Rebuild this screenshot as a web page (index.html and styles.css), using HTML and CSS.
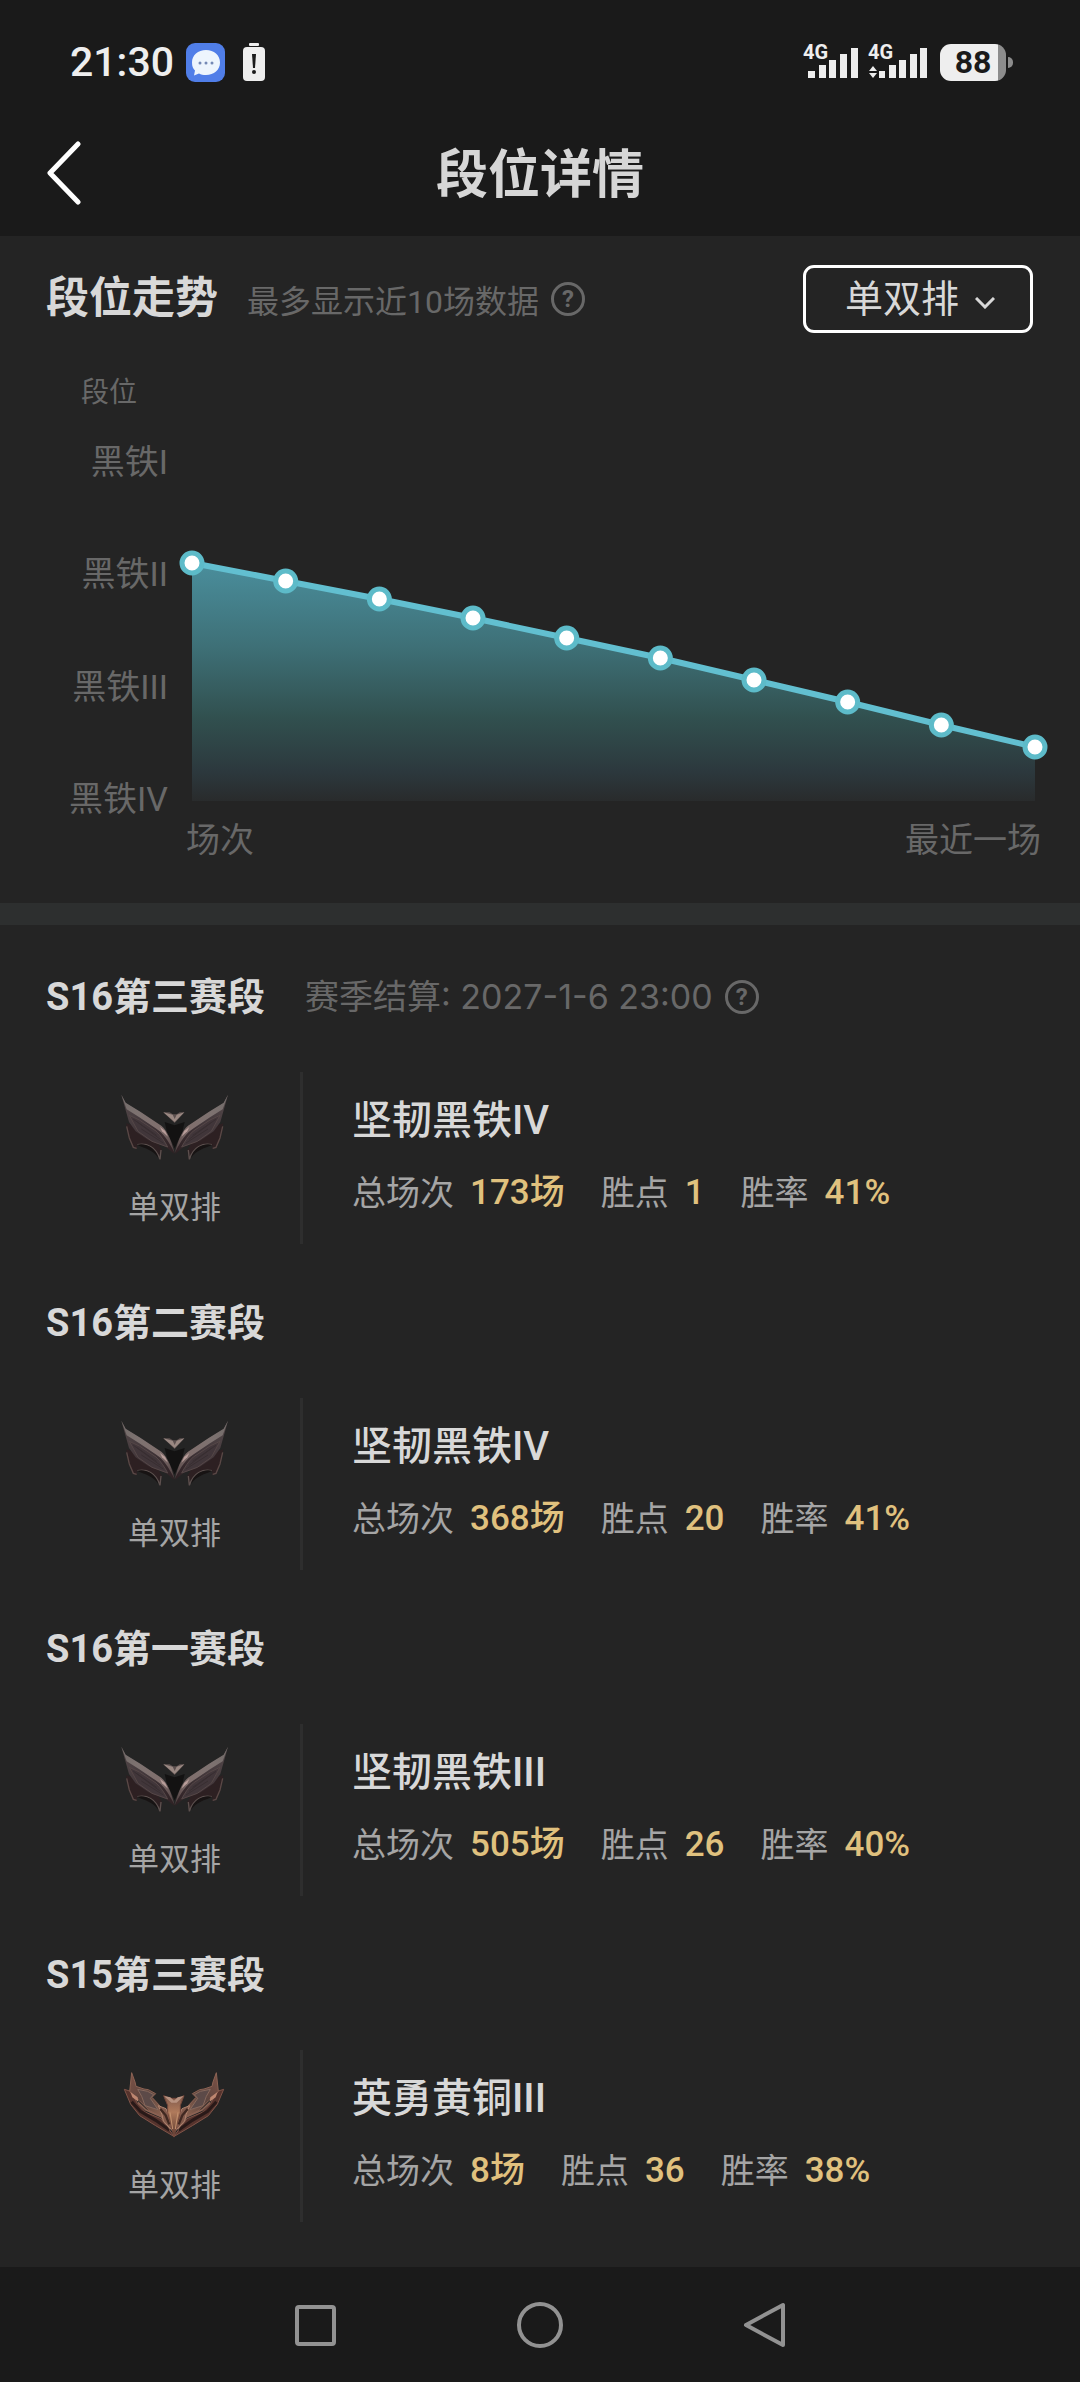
FILE: index.html
```html
<!DOCTYPE html>
<html lang="zh-CN">

<head>
    <meta charset="UTF-8">
    <meta name="viewport" content="width=device-width, initial-scale=1">
    <title>段位详情</title>
    <link rel="stylesheet" href="styles.css">
</head>

<body>
    <!-- shared rank emblems -->
    <svg class="sprite" aria-hidden="true">
        <defs>
            <linearGradient id="ironWing" x1="0" y1="0" x2="1" y2="1">
                <stop offset="0" stop-color="#54494a" />
                <stop offset="0.5" stop-color="#41363a" />
                <stop offset="1" stop-color="#2e2023" />
            </linearGradient>
            <linearGradient id="ironEdge" x1="0" y1="0" x2="1" y2="1">
                <stop offset="0" stop-color="#706a68" />
                <stop offset="0.3" stop-color="#7d7270" />
                <stop offset="0.65" stop-color="#806f6d" />
                <stop offset="1" stop-color="#4c3d3e" />
            </linearGradient>
            <linearGradient id="bronze" x1="0" y1="0" x2="1" y2="1">
                <stop offset="0" stop-color="#7c5145" />
                <stop offset="0.5" stop-color="#5d453f" />
                <stop offset="1" stop-color="#8f6450" />
            </linearGradient>
            <linearGradient id="bronzeCore" x1="0" y1="0" x2="0" y2="1">
                <stop offset="0" stop-color="#7d584b" />
                <stop offset="0.4" stop-color="#b07a5b" />
                <stop offset="1" stop-color="#5c392f" />
            </linearGradient>
            <g id="ironSide">
                <path d="M48 136 L56 172 L68 209 L80 213 L82 199 C104 192 137 204 151 245 L156 216 L140 190 L90 150Z" fill="#2d2022" />
                <path d="M50 145 L58 180 L70 208 L80 211" fill="none" stroke="#5a4846" stroke-width="4" />
                <path d="M82 200 C110 194 138 206 150 244 L153 216" fill="none" stroke="#5c504e" stroke-width="4" />
                <path d="M80 201 C104 210 130 216 145 240 C137 208 104 193 80 201Z" fill="#171313" />
                <path d="M34 50 L47 76 L91 103 L145 139 C166 151 181 183 193 228 L168 207 L116 187 L77 160 L57 132Z" fill="url(#ironWing)" />
                <path d="M34 50 L47 74 L92 102 L146 138 C168 150 182 180 194 226 C173 184 160 166 137 151 L88 118 L50 94Z" fill="url(#ironEdge)" />
                <path d="M58 112 L88 126 L138 159 C153 172 165 192 173 207 L126 190 L84 160Z" fill="#41363a" stroke="#554747" stroke-width="3" />
                <path d="M70 124 L140 172 M82 132 L151 184 M94 153 L160 195" stroke="#382e31" stroke-width="3" />
                <path d="M150 147 L165 158 L174 176 L156 160Z" fill="#b89d9a" />
            </g>
            <g id="bronzeSide">
                <path d="M43 100 L62 106 L82 142 L107 169 L153 188 L193 242 L137 209 L89 179 L62 145Z" fill="#55332d" stroke="#805448" stroke-width="3" />
                <path d="M65 50 L75 78 L78 91 L102 99 L115 101 L137 113 L126 124 L151 151 L158 184 L117 163 L88 134 L59 106Z" fill="url(#bronze)" stroke="#8b6253" stroke-width="3" />
                <path d="M83 100 L113 106 L131 116 L121 127 L144 161 L105 149 L95 121Z" fill="#5c4a48" stroke="#87695d" stroke-width="3" />
                <path d="M61 108 L83 124 L85 137 L67 124Z" fill="#bd8670" />
                <path d="M65 137 L91 166 L137 193 L178 222" fill="none" stroke="#291918" stroke-width="9" />
                <path d="M84 139 L108 162 L154 182 L181 220" fill="none" stroke="#8c6253" stroke-width="5" />
                <path d="M145 149 L168 158 L179 187 L187 224 L160 195 L156 176Z" fill="#81594b" stroke="#b0846f" stroke-width="3" />
                <path d="M151 159 L167 178 L178 205" fill="none" stroke="#402821" stroke-width="7" />
            </g>
            <symbol id="iron" viewBox="0 0 390 270">
                <path d="M164 132 L194 142 L224 132 L217 162 L194 211 L171 162Z" fill="#131212" />
                <use href="#ironSide" />
                <use href="#ironSide" transform="translate(388 0) scale(-1 1)" />
                <path d="M160 103 L179 103 L188 109 L200 109 L209 103 L223 103 L194 135Z" fill="#5d5150" />
                <path d="M160 103 L188 110 L194 123 L200 110 L223 103 L194 132Z" fill="#9a8882" />
            </symbol>
            <symbol id="bronzeBadge" viewBox="0 0 390 270">
                <use href="#bronzeSide" />
                <use href="#bronzeSide" transform="translate(384 0) scale(-1 1)" />
                <path d="M161 119 L181 127 L204 127 L222 119 L211 148 L211 170 L192 242 L173 170 L173 148Z" fill="url(#bronzeCore)" stroke="#75483b" stroke-width="3" />
                <path d="M162 120 L181 124 L192 134 L203 124 L221 120 L200 140 L184 140Z" fill="#b89280" />
                <path d="M180 169 L188 219 M204 169 L196 219" stroke="#c4926f" stroke-width="3" />
            </symbol>
        </defs>
    </svg>

    <div class="status-bar">
        <div class="status-left">
            <span class="clock">21:30</span>
            <svg class="message-icon" viewBox="0 0 39 39" aria-hidden="true">
                <rect width="39" height="39" rx="9" fill="#507ee8" />
                <path d="M20 7C12 7 6 12 6 19.500c0 4 1 6 3 8l-1 5 5-2c2 1 4 1.500 7 1.500 8 0 14-5 14-12.500S28 7 20 7z" fill="#edf5fd" />
                <g fill="#7489b5">
                    <circle cx="14" cy="20" r="1.500" />
                    <circle cx="20" cy="20" r="1.500" />
                    <circle cx="26" cy="20" r="1.500" />
                </g>
            </svg>
            <svg class="alert-icon" viewBox="0 0 22 38" aria-hidden="true">
                <rect x="6" width="10" height="3" rx="1" fill="#eee" />
                <rect y="4" width="22" height="34" rx="4" fill="#eee" />
                <path d="M9 11h4l-1 14h-2z" fill="#1a1a1a" />
                <circle cx="11" cy="29" r="2" fill="#1a1a1a" />
            </svg>
        </div>
        <div class="status-right">
            <svg class="signal" viewBox="0 0 60 46" aria-hidden="true">
                <text x="1" y="20">4G</text>
                <path d="M6 32h7v7H6zM17 26h7v13h-7zM27 21h7v18h-7zM38 15h7v24h-7zM49 9h7v30h-7z" />
            </svg>
            <svg class="signal" viewBox="0 0 60 46" aria-hidden="true">
                <text x="1" y="20">4G</text>
                <path d="M12 32h6v7h-6zM22 26h7v13h-7zM32 21h7v18h-7zM43 15h7v24h-7zM53 9h7v30h-7z" />
                <path d="M6 27l4 5H2zM6 39l-4-5h8z" />
            </svg>
            <div class="battery"><span>88</span></div>
        </div>
    </div>

    <header class="page-header">
        <button class="back" type="button" aria-label="返回">
            <svg viewBox="0 0 36 64" aria-hidden="true">
                <path d="M32 3 L4 32 L32 61" />
            </svg>
        </button>
        <h1>段位详情</h1>
    </header>

    <main>
        <section class="trend">
            <div class="trend-head">
                <div class="trend-title">
                    <h2>段位走势</h2>
                    <span class="hint">最多显示近10场数据</span>
                </div>
                <button class="help" type="button" aria-label="走势说明">?</button>
                <div class="mode">
                    <select class="mode-select" aria-label="排位模式">
                        <option>单双排</option>
                    </select>
                    <svg class="mode-arrow" viewBox="0 0 20 12" aria-hidden="true">
                        <path d="M1 1 L10 10 L19 1" />
                    </svg>
                </div>
            </div>

            <p class="axis-name">段位</p>
            <div class="chart">
                <div class="y-axis">
                    <span>黑铁I</span>
                    <span>黑铁II</span>
                    <span>黑铁III</span>
                    <span>黑铁IV</span>
                </div>
                <svg class="plot" viewBox="0 0 871 372" role="img" aria-label="段位走势">
                    <defs>
                        <linearGradient id="area" x1="0" y1="0" x2="0" y2="1">
                            <stop offset="0" stop-color="#4a8e9c" />
                            <stop offset="0.35" stop-color="#3e7077" />
                            <stop offset="0.65" stop-color="#31504f" />
                            <stop offset="0.88" stop-color="#2c383d" />
                            <stop offset="1" stop-color="#292b2c" />
                        </linearGradient>
                    </defs>
                    <path id="fill" fill="url(#area)" />
                    <polyline id="line" />
                    <g id="dots"></g>
                </svg>
                <div class="x-axis">
                    <span>场次</span>
                    <span>最近一场</span>
                </div>
            </div>
        </section>

        <div class="seasons">
            <section class="season">
                <div class="season-head">
                    <h3>S16第三赛段</h3>
                    <span class="settle">赛季结算: 2027-1-6 23:00</span>
                    <button class="help" type="button" aria-label="结算说明">?</button>
                </div>
                <div class="season-body">
                    <div class="rank">
                        <svg class="emblem" aria-hidden="true"><use href="#iron" /></svg>
                        <span>单双排</span>
                    </div>
                    <div class="detail">
                        <h4>坚韧黑铁IV</h4>
                        <dl>
                            <div><dt>总场次</dt><dd>173场</dd></div>
                            <div><dt>胜点</dt><dd>1</dd></div>
                            <div><dt>胜率</dt><dd>41%</dd></div>
                        </dl>
                    </div>
                </div>
            </section>

            <section class="season">
                <div class="season-head">
                    <h3>S16第二赛段</h3>
                </div>
                <div class="season-body">
                    <div class="rank">
                        <svg class="emblem" aria-hidden="true"><use href="#iron" /></svg>
                        <span>单双排</span>
                    </div>
                    <div class="detail">
                        <h4>坚韧黑铁IV</h4>
                        <dl>
                            <div><dt>总场次</dt><dd>368场</dd></div>
                            <div><dt>胜点</dt><dd>20</dd></div>
                            <div><dt>胜率</dt><dd>41%</dd></div>
                        </dl>
                    </div>
                </div>
            </section>

            <section class="season">
                <div class="season-head">
                    <h3>S16第一赛段</h3>
                </div>
                <div class="season-body">
                    <div class="rank">
                        <svg class="emblem" aria-hidden="true"><use href="#iron" /></svg>
                        <span>单双排</span>
                    </div>
                    <div class="detail">
                        <h4>坚韧黑铁III</h4>
                        <dl>
                            <div><dt>总场次</dt><dd>505场</dd></div>
                            <div><dt>胜点</dt><dd>26</dd></div>
                            <div><dt>胜率</dt><dd>40%</dd></div>
                        </dl>
                    </div>
                </div>
            </section>

            <section class="season">
                <div class="season-head">
                    <h3>S15第三赛段</h3>
                </div>
                <div class="season-body">
                    <div class="rank">
                        <svg class="emblem" aria-hidden="true"><use href="#bronzeBadge" /></svg>
                        <span>单双排</span>
                    </div>
                    <div class="detail">
                        <h4>英勇黄铜III</h4>
                        <dl>
                            <div><dt>总场次</dt><dd>8场</dd></div>
                            <div><dt>胜点</dt><dd>36</dd></div>
                            <div><dt>胜率</dt><dd>38%</dd></div>
                        </dl>
                    </div>
                </div>
            </section>
        </div>
    </main>

    <nav class="nav-bar">
        <button type="button" aria-label="最近任务">
            <svg viewBox="0 0 48 48" aria-hidden="true"><rect x="6" y="6" width="37" height="37" rx="2" /></svg>
        </button>
        <button type="button" aria-label="主屏幕">
            <svg viewBox="0 0 48 48" aria-hidden="true"><circle cx="24" cy="24" r="21" /></svg>
        </button>
        <button type="button" aria-label="后退">
            <svg viewBox="0 0 48 48" aria-hidden="true"><path d="M42 4 V44 L5 24Z" /></svg>
        </button>
    </nav>

    <script>
        // last 10 matches, y position inside the plot
        const points = [119, 137, 155, 174, 194, 214, 236, 258, 281, 303];
        const left = 14;
        const right = 857;
        const bottom = 357;

        const step = (right - left) / (points.length - 1);
        const coords = points.map((y, i) => [left + i * step, y]);
        const text = coords.map(p => p.join(',')).join(' ');

        document.getElementById('line').setAttribute('points', text);
        document.getElementById('fill').setAttribute('d', `M${text} ${right},${bottom} ${left},${bottom}Z`);
        document.getElementById('dots').innerHTML = coords
            .map(([x, y]) => `<circle cx="${x}" cy="${y}" r="10" />`)
            .join('');
    </script>
</body>

</html>
```
FILE: styles.css
```css
* {
    margin: 0;
    padding: 0;
    box-sizing: border-box;
}

body {
    display: flex;
    flex-direction: column;
    min-height: 100vh;
    background: #242424;
    color: #d8d8d8;
    font-family: Roboto, "Noto Sans CJK SC", sans-serif;
}

button {
    background: none;
    border: 0;
    cursor: pointer;
}

svg {
    display: block;
}

.sprite {
    position: absolute;
    width: 0;
    height: 0;
}

/* status bar */
.status-bar {
    display: flex;
    justify-content: space-between;
    align-items: center;
    height: 110px;
    padding: 14px 74px 0 70px;
    background: #1a1a1a;
}

.status-left,
.status-right {
    display: flex;
    align-items: center;
}

.clock {
    margin-right: 12px;
    font-size: 41px;
    font-weight: 500;
    line-height: 48px;
    color: #eee;
}

.message-icon {
    width: 39px;
    height: 39px;
    margin-right: 18px;
}

.alert-icon {
    width: 22px;
    height: 38px;
}

.signal {
    width: 60px;
    height: 46px;
    margin-right: 5px;
    fill: #eee;
    font-size: 20px;
    font-weight: 700;
}

.battery {
    position: relative;
    width: 66px;
    height: 37px;
    margin-left: 8px;
    border-radius: 11px;
    background: linear-gradient(to right, #eee 88%, #8c8c8c 88%);
    color: #1a1a1a;
    font-size: 32px;
    font-weight: 700;
    line-height: 37px;
    text-align: center;
}

.battery::after {
    content: "";
    position: absolute;
    left: 68px;
    top: 13px;
    width: 5px;
    height: 11px;
    border-radius: 0 6px 6px 0;
    background: #8c8c8c;
}

/* header */
.page-header {
    display: grid;
    grid-template-columns: 80px 1fr 80px;
    align-items: center;
    height: 126px;
    padding: 0 46px;
    background: #1a1a1a;
}

.page-header h1 {
    padding-top: 6px;
    font-size: 52px;
    line-height: 64px;
    text-align: center;
    color: #d6d6d6;
}

.back svg {
    width: 36px;
    height: 64px;
    fill: none;
    stroke: #fff;
    stroke-width: 5;
    stroke-linecap: round;
    stroke-linejoin: round;
}

/* trend */
main {
    flex: 1;
}

.trend {
    padding: 29px 31px 46px 46px;
    border-bottom: 22px solid #2d2f2f;
}

.trend-head {
    display: flex;
    align-items: center;
    padding-right: 16px;
}

.trend-title {
    display: flex;
    align-items: baseline;
    gap: 29px;
}

.trend-title h2 {
    font-size: 43px;
    line-height: 52px;
}

.hint {
    font-size: 32px;
    line-height: 48px;
    color: #686868;
}

.help {
    width: 34px;
    height: 34px;
    margin-left: 12px;
    border: 3px solid #686868;
    border-radius: 50%;
    color: #686868;
    font-family: Roboto, sans-serif;
    font-size: 24px;
    font-weight: 700;
    line-height: 28px;
}

.mode {
    position: relative;
    margin-left: auto;
}

.mode-select {
    appearance: none;
    width: 230px;
    height: 68px;
    padding-left: 39px;
    border: 3px solid #fff;
    border-radius: 11px;
    background: transparent;
    color: #d8d8d8;
    font-family: inherit;
    font-size: 38px;
}

.mode-arrow {
    position: absolute;
    right: 38px;
    top: 32px;
    width: 20px;
    height: 12px;
    fill: none;
    stroke: #d8d8d8;
    stroke-width: 3;
    pointer-events: none;
}

.axis-name {
    margin: 46px 0 37px 35px;
    font-size: 28px;
    line-height: 28px;
    color: #686868;
}

.chart {
    display: grid;
    grid-template-columns: 122px 1fr;
    column-gap: 10px;
    row-gap: 7px;
    color: #686868;
    font-size: 34px;
    line-height: 34px;
}

.y-axis {
    display: flex;
    flex-direction: column;
    justify-content: space-between;
    align-items: flex-end;
    padding-top: 1px;
}

.plot {
    width: 100%;
}

.plot polyline {
    fill: none;
    stroke: #62bfd0;
    stroke-width: 6;
}

.plot circle {
    fill: #fff;
    stroke: #5dbbc9;
    stroke-width: 5;
}

.x-axis {
    grid-column: 2;
    display: flex;
    justify-content: space-between;
    padding: 0 8px;
}

/* seasons */
.seasons {
    display: flex;
    flex-direction: column;
    gap: 51px;
    padding: 44px 46px;
}

.season-head {
    display: flex;
    align-items: center;
    height: 56px;
    margin-bottom: 47px;
}

.season-head h3 {
    margin-right: 40px;
    font-size: 38px;
    line-height: 44px;
}

.settle {
    font-family: Inter, "Noto Sans CJK SC", sans-serif;
    font-size: 34px;
    line-height: 44px;
    color: #686868;
}

.season-body {
    display: flex;
    height: 172px;
}

.rank {
    display: flex;
    flex-direction: column;
    align-items: center;
    width: 257px;
    padding: 6px 0 0 3px;
    border-right: 3px solid #2e2e2e;
    color: #a5a5a5;
    font-size: 31px;
    line-height: 36px;
}

.emblem {
    width: 130px;
    height: 90px;
    margin-bottom: 22px;
}

.detail {
    padding: 25px 0 0 49px;
}

.detail h4 {
    margin-bottom: 24px;
    font-size: 40px;
    font-weight: 500;
    line-height: 48px;
}

.detail dl,
.detail dl div {
    display: flex;
}

.detail dl {
    gap: 36px;
    font-size: 34px;
    line-height: 48px;
}

.detail dl div {
    gap: 16px;
}

.detail dt {
    color: #a5a5a5;
}

.detail dd {
    color: #e0c17e;
    font-size: 35px;
    font-weight: 500;
}

/* system navigation */
.nav-bar {
    display: flex;
    justify-content: center;
    align-items: center;
    gap: 177px;
    height: 115px;
    background: #1a1a1a;
}

.nav-bar svg {
    width: 48px;
    height: 48px;
    fill: none;
    stroke: #929292;
    stroke-width: 4;
    stroke-linejoin: round;
}
```
